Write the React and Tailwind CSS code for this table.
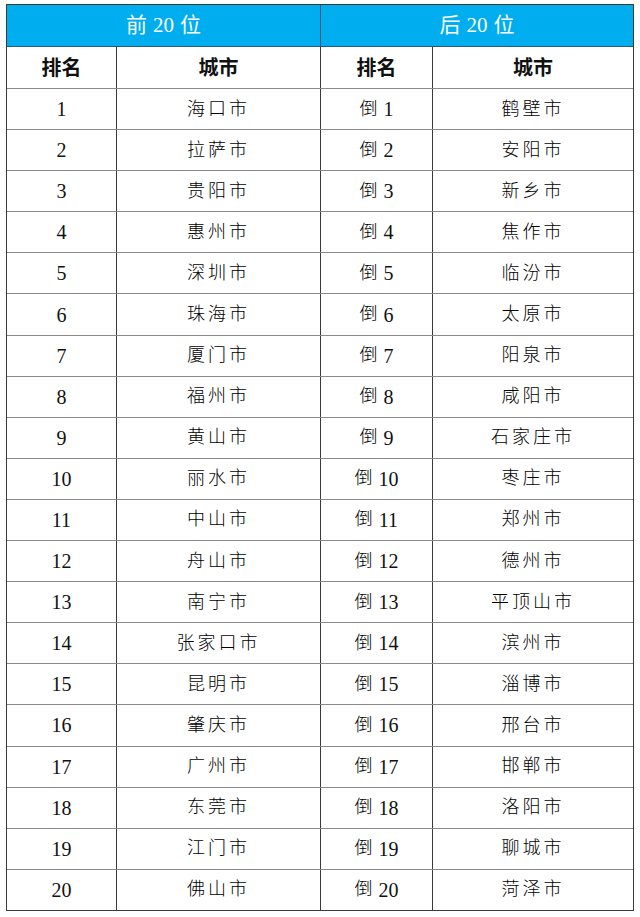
const rows = [
  ['海口市', '鹤壁市'],
  ['拉萨市', '安阳市'],
  ['贵阳市', '新乡市'],
  ['惠州市', '焦作市'],
  ['深圳市', '临汾市'],
  ['珠海市', '太原市'],
  ['厦门市', '阳泉市'],
  ['福州市', '咸阳市'],
  ['黄山市', '石家庄市'],
  ['丽水市', '枣庄市'],
  ['中山市', '郑州市'],
  ['舟山市', '德州市'],
  ['南宁市', '平顶山市'],
  ['张家口市', '滨州市'],
  ['昆明市', '淄博市'],
  ['肇庆市', '邢台市'],
  ['广州市', '邯郸市'],
  ['东莞市', '洛阳市'],
  ['江门市', '聊城市'],
  ['佛山市', '菏泽市'],
]

const font = { fontFamily: '"Liberation Serif", "Noto Sans CJK SC", serif' }

function App() {
  return (
    <main className="min-h-[917px] bg-white pt-[4px] pl-[6px]" style={font}>
      <div className="w-[628px] border-[1.5px] border-[#3a3a3a] text-[#111]">
        <div className="grid h-[41px] grid-cols-[314px_1fr] bg-[#00aeef] text-[21px] text-white">
          <div className="flex items-center justify-center gap-[6px] border-r border-[#2a5a78]">
            <span>前</span>
            <span>20</span>
            <span>位</span>
          </div>
          <div className="flex items-center justify-center gap-[6px]">
            <span>后</span>
            <span>20</span>
            <span>位</span>
          </div>
        </div>
        <div className="grid h-[42px] grid-cols-[110px_204px_112px_1fr] border-t border-[#2a5a78] text-[20px] font-bold">
          <div className="flex items-center justify-center border-r border-[#3a3a3a]">排名</div>
          <div className="flex items-center justify-center border-r border-[#3a3a3a]">城市</div>
          <div className="flex items-center justify-center border-r border-[#3a3a3a]">排名</div>
          <div className="flex items-center justify-center">城市</div>
        </div>
        {rows.map(([top, bottom], i) => (
          <div
            key={i}
            className="grid h-[41.1px] grid-cols-[110px_204px_112px_1fr] border-t border-[#8a8a8a] text-[20px]"
          >
            <div className="flex items-center justify-center border-r border-[#3a3a3a]">{i + 1}</div>
            <div className="flex items-center justify-center border-r border-[#3a3a3a] text-[18px] font-light tracking-[3px] text-[#000]">
              {top}
            </div>
            <div className="flex items-center justify-center border-r border-[#3a3a3a]">
              <span className="text-[18px] font-light text-[#000]">倒</span>
              <span className="ml-[6px]">{i + 1}</span>
            </div>
            <div className="flex items-center justify-center text-[18px] font-light tracking-[3px] text-[#000]">
              {bottom}
            </div>
          </div>
        ))}
      </div>
    </main>
  )
}

export default App
